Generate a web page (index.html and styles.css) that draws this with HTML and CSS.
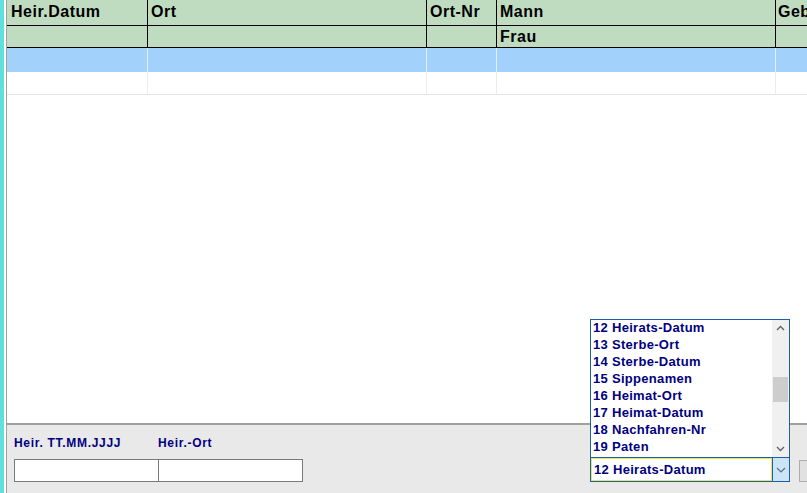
FILE: index.html
```html
<!DOCTYPE html>
<html lang="de">
<head>
<meta charset="UTF-8">
<title>Heiraten</title>
<link rel="stylesheet" href="styles.css">
</head>
<body>
<div class="frame">
<div class="main">

<div class="grid">
  <div class="row head">
    <div class="cell c1">Heir.Datum</div>
    <div class="cell c2">Ort</div>
    <div class="cell c3">Ort-Nr</div>
    <div class="cell c4">Mann</div>
    <div class="cell c5">Geb</div>
  </div>
  <div class="row head2">
    <div class="cell c1"></div>
    <div class="cell c2"></div>
    <div class="cell c3"></div>
    <div class="cell c4">Frau</div>
    <div class="cell c5"></div>
  </div>
  <div class="row sel">
    <div class="cell c1"></div>
    <div class="cell c2"></div>
    <div class="cell c3"></div>
    <div class="cell c4"></div>
    <div class="cell c5"></div>
  </div>
  <div class="row plain">
    <div class="cell c1"></div>
    <div class="cell c2"></div>
    <div class="cell c3"></div>
    <div class="cell c4"></div>
    <div class="cell c5"></div>
  </div>
</div>

<div class="panel">
  <div class="fields">
    <div class="lbl">Heir. TT.MM.JJJJ</div>
    <div class="lbl">Heir.-Ort</div>
    <div class="box first"></div>
    <div class="box second"></div>
  </div>

  <div class="combo">
    <div class="list">
      <div class="items">
        <div class="item">12 Heirats-Datum</div>
        <div class="item">13 Sterbe-Ort</div>
        <div class="item">14 Sterbe-Datum</div>
        <div class="item">15 Sippenamen</div>
        <div class="item">16 Heimat-Ort</div>
        <div class="item">17 Heimat-Datum</div>
        <div class="item">18 Nachfahren-Nr</div>
        <div class="item">19 Paten</div>
      </div>
      <div class="sbar">
        <svg class="arr" width="17" height="17" viewBox="0 0 17 17"><path d="M5 10 L8.5 6.5 L12 10" fill="none" stroke="#606060" stroke-width="1.3"/></svg>
        <div class="track"><div class="thumb"></div></div>
        <svg class="arr" width="17" height="17" viewBox="0 0 17 17"><path d="M5 7 L8.5 10.5 L12 7" fill="none" stroke="#606060" stroke-width="1.3"/></svg>
      </div>
    </div>
    <div class="ctext">12 Heirats-Datum</div>
    <div class="cbtn"><svg width="16" height="22" viewBox="0 0 16 22"><path d="M4 10 L8 14 L12 10" fill="none" stroke="#5a6f86" stroke-width="1.2"/></svg></div>
  </div>

  <div class="btn"></div>
</div>

</div>
</div>
</body>
</html>
```

FILE: styles.css
```css
html, body {margin:0;padding:0;height:100%;overflow:hidden;background:#fff;}
body {font-family:"Liberation Sans", Arial, sans-serif;}
.frame {height:493px;border-left:4px solid #5fe0dc;padding-left:2px;background:#fff;box-sizing:border-box;}
.main {height:100%;border-left:1px solid #a0a0a0;display:flex;flex-direction:column;overflow:hidden;}

.grid {height:423px;flex-shrink:0;background:#fff;}
.row {display:flex;box-sizing:border-box;}
.cell {box-sizing:border-box;border-right:1px solid #000;padding-left:4px;white-space:nowrap;overflow:hidden;}
.c1 {width:141px;}
.c2 {width:279px;padding-left:3px;}
.c3 {width:70px;padding-left:3px;}
.c4 {width:279px;padding-left:3px;}
.c5 {flex:1;border-right:0;padding-left:2px;}

.head, .head2 {background:#c0dcc0;font-weight:bold;font-size:16px;letter-spacing:0.5px;color:#000;border-bottom:1px solid #000;}
.head {height:26px;line-height:23px;}
.head2 {height:22px;line-height:21px;}
.sel {height:24px;background:#a2d1fb;}
.sel .cell {border-right-color:#e4f0fb;}
.plain {height:23px;border-bottom:1px solid #e6e6e6;}
.plain .cell {border-right-color:#ececec;}

.panel {flex:1;background:#e9e9e9;border-top:2px solid #a0a0a0;display:flex;align-items:flex-end;padding:0 0 11px 7px;}
.fields {display:grid;grid-template-columns:144px 145px;row-gap:9px;flex-shrink:0;}
.lbl {font-size:12px;font-weight:bold;color:#000080;letter-spacing:0.7px;line-height:14px;}
.box {height:23px;background:#fff;border:1px solid #7a7a7a;box-sizing:border-box;}
.box.first {width:145px;position:relative;z-index:1;}
.box.second {width:144px;margin-left:1px;border-left:0;}

.combo {position:relative;margin-left:287px;width:200px;height:25px;flex-shrink:0;box-sizing:border-box;border:1px solid #1c5fa8;display:flex;background:#fff;}
.ctext {flex:1;border:1px solid #e8e860;font-size:13px;font-weight:bold;color:#000080;letter-spacing:0.3px;line-height:21px;padding-left:2px;}
.cbtn {width:16px;background:#cce4f7;border-left:1px solid #1c5fa8;}
.cbtn svg {display:block;}

.list {position:absolute;left:-1px;bottom:100%;width:200px;height:139px;box-sizing:border-box;border:1px solid #1c5fa8;background:#fff;display:flex;z-index:2;}
.items {flex:1;padding-left:2px;}
.item {font-size:13px;font-weight:bold;color:#000080;letter-spacing:0.3px;line-height:17px;height:17px;white-space:nowrap;}
.item:first-child {margin-top:-1px;}
.sbar {width:17px;background:#f0f0f0;display:flex;flex-direction:column;}
.arr {display:block;}
.track {flex:1;position:relative;}
.thumb {margin:40px 1px 0 1px;height:25px;background:#cdcdcd;}

.btn {margin-left:9px;width:40px;height:22px;background:#e1e1e1;border:1px solid #adadad;box-sizing:border-box;flex-shrink:0;}
```
